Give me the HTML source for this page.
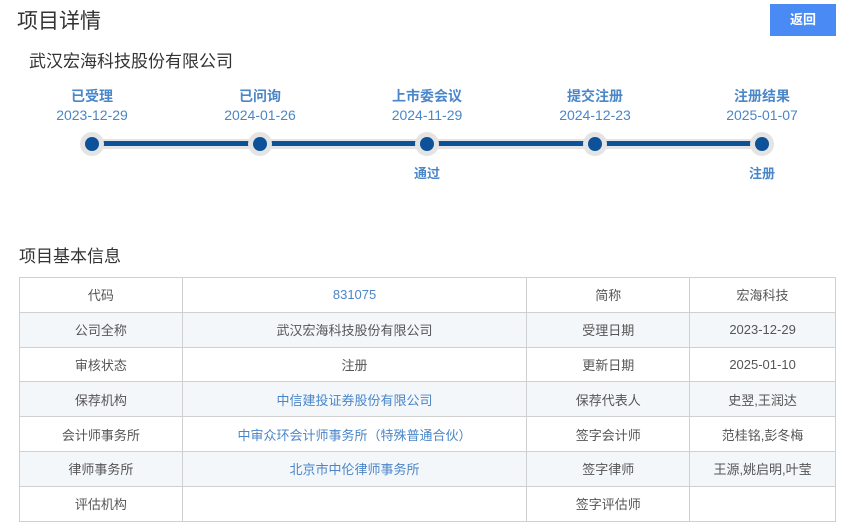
<!DOCTYPE html>
<html><head><meta charset="utf-8"><style>
*{margin:0;padding:0;box-sizing:border-box}
body{width:843px;height:530px;background:#fff;font-family:"Liberation Sans","Noto Sans CJK SC",sans-serif;position:relative;overflow:hidden;color:#333}
.abs{position:absolute;white-space:nowrap}
.btn{left:770px;top:4px;width:66px;height:32px;background:#4a8af4;color:#fff;font-size:13px;font-weight:bold;text-align:center;line-height:32px}
.step{position:absolute;width:120px;text-align:center;color:#4a86c8}
.step b{display:block;font-size:14px;line-height:16px}
.step span{display:block;font-size:14px;line-height:16px;margin-top:3px}
.sub{position:absolute;width:60px;text-align:center;color:#4a86c8;font-weight:bold;font-size:13px}
.dot{position:absolute;width:24px;height:24px;border-radius:50%;background:#e4e4e4}
.dot i{position:absolute;left:5px;top:5px;width:14px;height:14px;border-radius:50%;background:#0d5198}
table{position:absolute;left:19px;top:277px;width:817px;border-collapse:collapse;font-size:13px}
td{border:1px solid #d0d0d0;height:34.8px;padding:0;text-align:center;color:#555}
tr:nth-child(even) td{background:#f4f7fa}
td.v{color:#4a86c8}
</style></head><body>
<div class="abs" style="left:17px;top:5px;font-size:21px;color:#333">项目详情</div>
<div class="abs btn">返回</div>
<div class="abs" style="left:29px;top:47px;font-size:17px;color:#333">武汉宏海科技股份有限公司</div>
<div class="step" style="left:32px;top:88px"><b>已受理</b><span>2023-12-29</span></div>
<div class="step" style="left:200px;top:88px"><b>已问询</b><span>2024-01-26</span></div>
<div class="step" style="left:367px;top:88px"><b>上市委会议</b><span>2024-11-29</span></div>
<div class="step" style="left:535px;top:88px"><b>提交注册</b><span>2024-12-23</span></div>
<div class="step" style="left:702px;top:88px"><b>注册结果</b><span>2025-01-07</span></div>
<div class="abs" style="left:92px;top:139px;width:670px;height:10px;background:#e4e4e4"></div>
<div class="abs" style="left:92px;top:141px;width:670px;height:5px;background:#0d5198"></div>
<div class="dot" style="left:80px;top:132px"><i></i></div>
<div class="dot" style="left:248px;top:132px"><i></i></div>
<div class="dot" style="left:415px;top:132px"><i></i></div>
<div class="dot" style="left:583px;top:132px"><i></i></div>
<div class="dot" style="left:750px;top:132px"><i></i></div>
<div class="sub" style="left:397px;top:163px">通过</div>
<div class="sub" style="left:732px;top:163px">注册</div>
<div class="abs" style="left:19px;top:242px;font-size:17px;color:#333">项目基本信息</div>
<table>
<colgroup><col style="width:163px"><col style="width:345px"><col style="width:163px"><col style="width:146px"></colgroup>
<tr><td>代码</td><td class="v">831075</td><td>简称</td><td>宏海科技</td></tr>
<tr><td>公司全称</td><td>武汉宏海科技股份有限公司</td><td>受理日期</td><td>2023-12-29</td></tr>
<tr><td>审核状态</td><td>注册</td><td>更新日期</td><td>2025-01-10</td></tr>
<tr><td>保荐机构</td><td class="v">中信建投证券股份有限公司</td><td>保荐代表人</td><td>史翌,王润达</td></tr>
<tr><td>会计师事务所</td><td class="v">中审众环会计师事务所（特殊普通合伙）</td><td>签字会计师</td><td>范桂铭,彭冬梅</td></tr>
<tr><td>律师事务所</td><td class="v">北京市中伦律师事务所</td><td>签字律师</td><td>王源,姚启明,叶莹</td></tr>
<tr><td>评估机构</td><td></td><td>签字评估师</td><td></td></tr>
</table>
</body></html>
